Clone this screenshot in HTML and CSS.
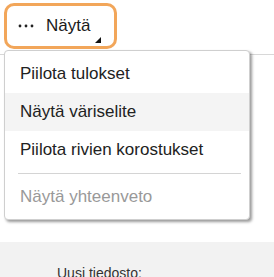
FILE: index.html
```html
<!DOCTYPE html>
<html>
<head>
<meta charset="utf-8">
<link rel="stylesheet" href="styles.css">
</head>
<body>
<div class="page">
  <div class="toolbar">
    <button class="view-btn">
      <svg class="dots" width="16" height="4" viewBox="0 0 16 4"><circle cx="2" cy="2" r="1.4"/><circle cx="8" cy="2" r="1.4"/><circle cx="14" cy="2" r="1.4"/></svg>
      <span class="label">Näytä</span>
      <span class="corner"></span>
    </button>
  </div>
  <div class="spacer"></div>
  <div class="panel">
    <div class="panel-text">Uusi tiedosto:</div>
  </div>
  <div class="menu">
    <div class="item">Piilota tulokset</div>
    <div class="item active">Näytä väriselite</div>
    <div class="item">Piilota rivien korostukset</div>
    <div class="sep"></div>
    <div class="item disabled">Näytä yhteenveto</div>
  </div>
</div>
</body>
</html>
```
FILE: styles.css
```css
html, body {
  margin: 0;
  padding: 0;
  background: #fff;
  font-family: "Liberation Sans", Arial, sans-serif;
  color: #222;
}
.page {
  position: relative;
  width: 274px;
  height: 277px;
  overflow: hidden;
}
.toolbar {
  height: 55px;
  border-bottom: 1px solid #d8d8d8;
  box-sizing: border-box;
  padding: 3px 0 0 4px;
}
.view-btn {
  position: relative;
  display: flex;
  align-items: center;
  width: 113px;
  height: 46px;
  box-sizing: border-box;
  border: 3px solid #f2a65a;
  border-radius: 10px;
  background: #fff;
  padding: 0 0 0 11px;
  margin: 0;
  font-family: inherit;
  color: #1a1a1a;
}
.dots {
  fill: #222;
  display: block;
}
.label {
  font-size: 17px;
  margin-left: 12px;
  margin-top: -1px;
}
.corner {
  position: absolute;
  right: 13px;
  bottom: 3px;
  width: 0;
  height: 0;
  border-left: 6px solid transparent;
  border-bottom: 6px solid #111;
}
.spacer {
  height: 187px;
}
.panel {
  background: #f2f2f2;
  height: 35px;
  padding: 23px 0 0 57px;
  box-sizing: border-box;
}
.panel-text {
  font-size: 14px;
  color: #333;
}
.menu {
  position: absolute;
  left: 4px;
  top: 50px;
  width: 246px;
  height: 170px;
  box-sizing: border-box;
  background: #fff;
  border: 1px solid #cfcfcf;
  border-radius: 4px;
  box-shadow: 2px 2px 3px rgba(0,0,0,0.4);
  padding-top: 4px;
}
.item {
  height: 38px;
  line-height: 38px;
  padding-left: 15px;
  font-size: 17px;
  color: #222;
}
.item.active {
  background: #f4f4f4;
}
.item.disabled {
  color: #999;
}
.sep {
  height: 1px;
  background: #d4d4d4;
  margin: 4px 8px 4px 13px;
}
```
